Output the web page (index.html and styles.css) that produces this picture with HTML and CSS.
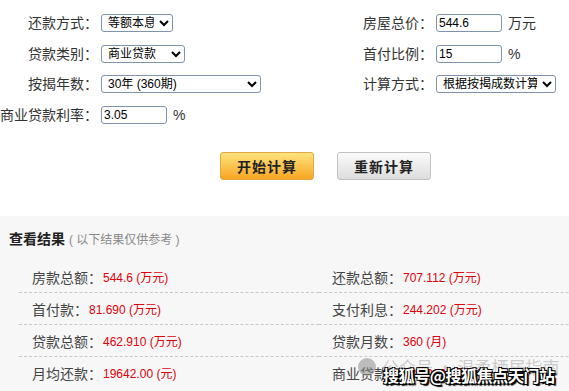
FILE: index.html
```html
<!DOCTYPE html>
<html lang="zh-CN">
<head>
    <meta charset="UTF-8" />
    <meta name="viewport" content="width=device-width, initial-scale=1.0" />
    <title>房贷计算器</title>
    <link rel="stylesheet" href="styles.css">
</head>
<body>
    <div class="calc">
        <form class="calc-form" id="calc-form">
            <div class="col">
                <div class="row">
                    <label for="pay-type">还款方式：</label>
                    <select id="pay-type" class="sel-pay">
                        <option>等额本息</option>
                        <option>等额本金</option>
                    </select>
                </div>
                <div class="row">
                    <label for="loan-type">贷款类别：</label>
                    <select id="loan-type" class="sel-loan">
                        <option>商业贷款</option>
                        <option>公积金贷款</option>
                        <option>组合贷款</option>
                    </select>
                </div>
                <div class="row">
                    <label for="years">按揭年数：</label>
                    <select id="years" class="sel-years">
                        <option>30年 (360期)</option>
                        <option>20年 (240期)</option>
                    </select>
                </div>
                <div class="row">
                    <label for="rate">商业贷款利率：</label>
                    <input type="text" id="rate" value="3.05" />
                    <span class="unit">%</span>
                </div>
            </div>
            <div class="col">
                <div class="row">
                    <label for="price">房屋总价：</label>
                    <input type="text" id="price" value="544.6" />
                    <span class="unit">万元</span>
                </div>
                <div class="row">
                    <label for="down">首付比例：</label>
                    <input type="text" id="down" value="15" />
                    <span class="unit">%</span>
                </div>
                <div class="row">
                    <label for="mode">计算方式：</label>
                    <select id="mode" class="sel-mode">
                        <option>根据按揭成数计算</option>
                        <option>根据贷款总额计算</option>
                    </select>
                </div>
            </div>
        </form>
        <div class="actions">
            <button type="button" class="btn btn-start">开始计算</button>
            <button type="button" class="btn btn-reset">重新计算</button>
        </div>
    </div>

    <div class="result">
        <h2>查看结果 <span>( 以下结果仅供参考 )</span></h2>
        <ul class="result-list">
            <li><span class="key">房款总额：</span><em>544.6 (万元)</em></li>
            <li><span class="key">还款总额：</span><em>707.112 (万元)</em></li>
            <li><span class="key">首付款：</span><em>81.690 (万元)</em></li>
            <li><span class="key">支付利息：</span><em>244.202 (万元)</em></li>
            <li><span class="key">贷款总额：</span><em>462.910 (万元)</em></li>
            <li><span class="key">贷款月数：</span><em>360 (月)</em></li>
            <li><span class="key">月均还款：</span><em>19642.00 (元)</em></li>
            <li><span class="key">商业贷款：</span><em>462.910 (万元)</em></li>
        </ul>
        <div class="mark-faint"><i class="mark-icon"></i>公众号 · 温柔栖居指南</div>
        <div class="mark">搜狐号@搜狐焦点天门站</div>
    </div>
</body>
</html>
```

FILE: styles.css
```css
body {
    margin: 0;
    padding: 0;
    font-family: "Liberation Sans", "Noto Sans CJK SC", sans-serif;
    color: #333;
    background-color: #ffffff;
}

.calc {
    padding-top: 8px;
    height: 208px;
}

.calc-form {
    display: flex;
}

.col {
    flex: none;
    width: 335px;
}

.col + .col {
    width: 234px;
}

.row {
    display: flex;
    align-items: center;
    height: 30.6px;
    font-size: 14px;
}

.row label {
    width: 98px;
    margin-right: 3px;
    text-align: right;
    white-space: nowrap;
    line-height: 18px;
}

.row select,
.row input {
    box-sizing: border-box;
    height: 18px;
    padding: 0 2px;
    font-family: "Liberation Sans", "Noto Sans CJK SC", sans-serif;
    font-size: 12px;
    color: #000;
    background-color: #fff;
    border: 1px solid #7f93ad;
    border-radius: 3px;
}

.row input {
    width: 66px;
}

.sel-pay {
    width: 72px;
}

.sel-loan {
    width: 84px;
}

.sel-years {
    width: 160px;
}

.sel-mode {
    width: 120px;
}

.unit {
    margin-left: 6px;
    line-height: 18px;
}

.actions {
    display: flex;
    gap: 23px;
    padding: 22px 0 0 220px;
}

.btn {
    width: 94px;
    height: 28px;
    padding: 0;
    font-family: "Noto Sans CJK SC", sans-serif;
    font-size: 14px;
    font-weight: bold;
    letter-spacing: 1px;
    color: #222;
    border-radius: 3px;
    cursor: pointer;
}

.btn-start {
    background: linear-gradient(#ffe37e, #f7a623);
    border: 1px solid #e4a844;
}

.btn-reset {
    background: linear-gradient(#fbfbfb, #dddddd);
    border: 1px solid #c2c2c2;
}

.result {
    position: relative;
    height: 175px;
    overflow: hidden;
    padding-top: 13px;
    box-sizing: border-box;
    background-color: #f7f7f7;
}

.result h2 {
    margin: 0 0 11px 9px;
    font-size: 14px;
    line-height: 20px;
    color: #222;
}

.result h2 span {
    font-size: 12px;
    font-weight: normal;
    color: #8a8a8a;
}

.result-list {
    display: grid;
    grid-template-columns: 300px 300px;
    margin: 0 0 0 19px;
    padding: 0;
    list-style: none;
}

.result-list li {
    display: flex;
    align-items: center;
    height: 31px;
    padding-left: 13px;
    border-bottom: 1px dashed #c8c8c8;
    white-space: nowrap;
}

.result-list li:nth-last-child(-n+2) {
    border-bottom: none;
}

.key {
    font-size: 14px;
    color: #444;
}

.result-list em {
    margin-left: 1px;
    font-style: normal;
    font-size: 12px;
    color: #e0000b;
}

.mark-faint {
    position: absolute;
    left: 358px;
    top: 141px;
    display: flex;
    align-items: center;
    gap: 6px;
    font-family: "Noto Sans CJK SC", sans-serif;
    font-size: 17px;
    line-height: 20px;
    color: rgba(160, 160, 160, 0.5);
    white-space: nowrap;
}

.mark-icon {
    width: 18px;
    height: 18px;
    border-radius: 50%;
    background-color: rgba(140, 140, 140, 0.55);
}

.mark {
    position: absolute;
    left: 383px;
    top: 149px;
    font-family: "Noto Sans CJK SC", sans-serif;
    font-size: 16px;
    font-weight: bold;
    line-height: 20px;
    letter-spacing: -0.4px;
    color: #fff;
    white-space: nowrap;
    text-shadow: 1px 1px 0 #000, -1px -1px 0 #000, 1px -1px 0 #000, -1px 1px 0 #000, 2px 2px 1px #000;
}
```
